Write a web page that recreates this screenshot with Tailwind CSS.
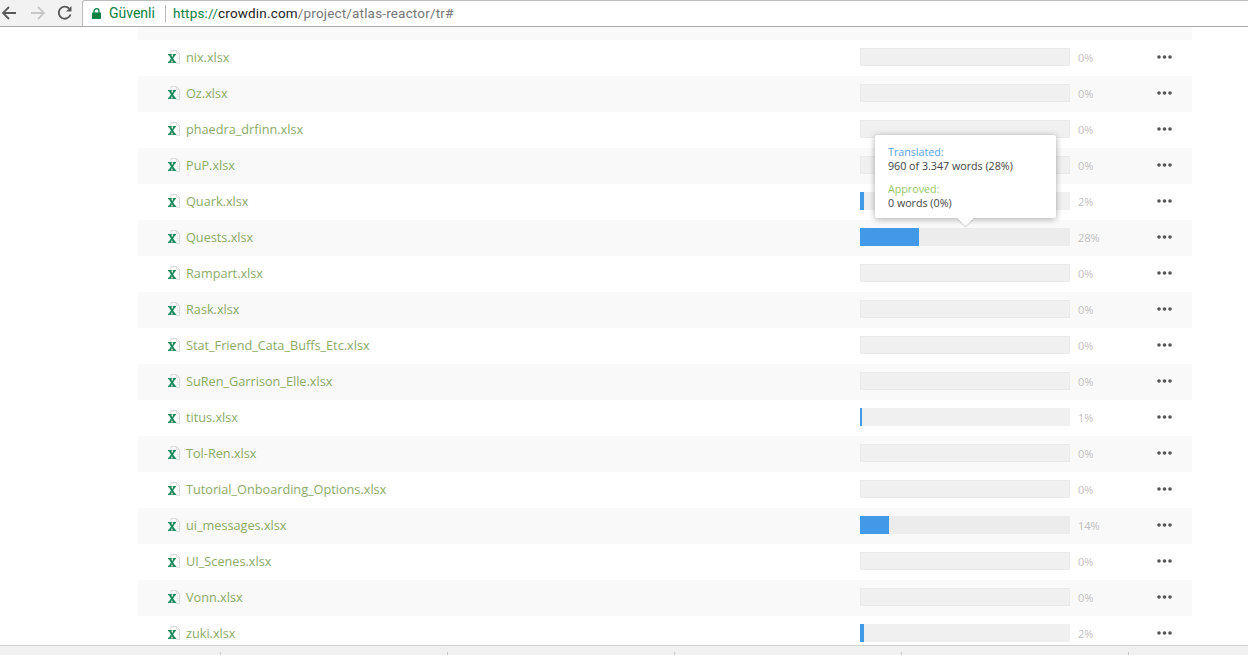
<!doctype html>
<html>
<head>
<meta charset="utf-8">
<script src="https://cdn.jsdelivr.net/npm/@tailwindcss/browser@4"></script>
</head>
<body class="m-0 bg-white">
<svg class="hidden"><defs>
<symbol id="xl" viewBox="0 0 12 14">
<path d="M3 3.500V.5H8.500L11.500 3.500V13.500H8.500" fill="none" stroke="#d8dcda"/>
<path d="M8.500 .5V3.500H11.500M9 6H10.500M9 8.500H10.500M9 11H10.500" fill="none" stroke="#e0e3e1"/>
<path d="M0 4H3.800V5.200H3.300L4.200 7L5.200 5.200H4.700V4H8V5.200H7.200L5.200 8.500L7.400 11.800H8.200V13H4.300V11.800H4.800L4 10.200L3.100 11.800H3.600V13H0V11.800H.8L2.900 8.600L.9 5.200H0Z" fill="#1f8a5b"/>
</symbol>
<symbol id="dots" viewBox="0 0 15 4">
<circle cx="2" cy="2" r="1.800" fill="#555"/><circle cx="7.500" cy="2" r="1.800" fill="#555"/><circle cx="13" cy="2" r="1.800" fill="#555"/>
</symbol>
</defs></svg>
<div class="relative flex h-[655px] w-[1248px] flex-col overflow-hidden font-['Open_Sans',sans-serif]">
  <header class="flex h-[27px] shrink-0 items-center border-b border-[#a9a9a9] bg-[#f2f2f2]">
    <svg class="ml-[1px] h-4 w-4" viewBox="0 0 16 16" fill="none" stroke="#5a5a5a" stroke-width="1.800"><path d="M15 8H2M8 2L2 8L8 14"/></svg>
    <svg class="ml-[13px] h-4 w-4" viewBox="0 0 16 16" fill="none" stroke="#c8c8c8" stroke-width="1.800"><path d="M1 8H14M8 2L14 8L8 14"/></svg>
    <svg class="ml-[11px] h-4 w-4" viewBox="0 0 16 16" fill="none" stroke="#5a5a5a" stroke-width="1.900"><path d="M13.500 9.500A6 6 0 1 1 12.200 3.600"/><path d="M14.500 1V6.500H9Z" fill="#5a5a5a" stroke="none"/></svg>
    <div class="ml-[9px] flex h-[26px] flex-1 items-center rounded-tl-[3px] border-l border-t border-[#bdbdbd] bg-white pl-[9px]">
      <svg class="h-[11px] w-[9px]" viewBox="0 0 9 11"><path d="M2 5V3.200A2.500 2.500 0 0 1 7 3.200V5" fill="none" stroke="#0b8043" stroke-width="1.300"/><rect x="0" y="4.500" width="9" height="6.500" rx=".7" fill="#0b8043"/></svg>
      <span class="ml-[8px] font-['Roboto',sans-serif] text-[14px] text-[#0b8043]">Güvenli</span>
      <span class="ml-[10px] h-[17px] w-px bg-[#b5b5b5]"></span>
      <span class="ml-[7px] font-['Roboto',sans-serif] text-[13.500px] tracking-[0.17px] text-[#777]"><span class="text-[#0b8043]">https://</span><span class="text-[#222]">crowdin.com</span>/project/atlas-reactor/tr#</span>
    </div>
  </header>

  <main class="min-h-0 flex-1 overflow-hidden">
    <div class="ml-[138px] h-[13px] w-[1054px] bg-[#f9f9f9]"></div>
    <ul class="ml-[138px] w-[1054px] text-[12.700px] text-[#8cab68]">
      <li class="flex h-9 items-center pb-0.5 pl-[30px]"><svg class="h-[14px] w-[12px]"><use href="#xl"/></svg><span class="ml-[6px] mt-0.5 w-[674px]">nix.xlsx</span><div class="h-[18px] w-[210px] border border-[#ebebeb] bg-[#f0f0f0]"></div><span class="ml-2 mt-0.5 w-[79px] text-[11px] text-[#c0c0c0]">0%</span><svg class="h-1 w-[15px]"><use href="#dots"/></svg></li>
      <li class="flex h-9 items-center bg-[#f9f9f9] pb-0.5 pl-[30px]"><svg class="h-[14px] w-[12px]"><use href="#xl"/></svg><span class="ml-[6px] mt-0.5 w-[674px]">Oz.xlsx</span><div class="h-[18px] w-[210px] border border-[#ebebeb] bg-[#f0f0f0]"></div><span class="ml-2 mt-0.5 w-[79px] text-[11px] text-[#c0c0c0]">0%</span><svg class="h-1 w-[15px]"><use href="#dots"/></svg></li>
      <li class="flex h-9 items-center pb-0.5 pl-[30px]"><svg class="h-[14px] w-[12px]"><use href="#xl"/></svg><span class="ml-[6px] mt-0.5 w-[674px]">phaedra_drfinn.xlsx</span><div class="h-[18px] w-[210px] border border-[#ebebeb] bg-[#f0f0f0]"></div><span class="ml-2 mt-0.5 w-[79px] text-[11px] text-[#c0c0c0]">0%</span><svg class="h-1 w-[15px]"><use href="#dots"/></svg></li>
      <li class="flex h-9 items-center bg-[#f9f9f9] pb-0.5 pl-[30px]"><svg class="h-[14px] w-[12px]"><use href="#xl"/></svg><span class="ml-[6px] mt-0.5 w-[674px]">PuP.xlsx</span><div class="h-[18px] w-[210px] border border-[#ebebeb] bg-[#f0f0f0]"></div><span class="ml-2 mt-0.5 w-[79px] text-[11px] text-[#c0c0c0]">0%</span><svg class="h-1 w-[15px]"><use href="#dots"/></svg></li>
      <li class="flex h-9 items-center pb-0.5 pl-[30px]"><svg class="h-[14px] w-[12px]"><use href="#xl"/></svg><span class="ml-[6px] mt-0.5 w-[674px]">Quark.xlsx</span><div class="h-[18px] w-[210px] bg-[#f0f0f0]"><div class="h-full w-1 bg-[#4299e8]"></div></div><span class="ml-2 mt-0.5 w-[79px] text-[11px] text-[#c0c0c0]">2%</span><svg class="h-1 w-[15px]"><use href="#dots"/></svg></li>
      <li class="flex h-9 items-center bg-[#f9f9f9] pb-0.5 pl-[30px]"><svg class="h-[14px] w-[12px]"><use href="#xl"/></svg><span class="ml-[6px] mt-0.5 w-[674px]">Quests.xlsx</span><div class="h-[18px] w-[210px] bg-[#ececec]"><div class="h-full w-[59px] bg-[#4299e8]"></div></div><span class="ml-2 mt-0.5 w-[79px] text-[11px] text-[#c0c0c0]">28%</span><svg class="h-1 w-[15px]"><use href="#dots"/></svg></li>
      <li class="flex h-9 items-center pb-0.5 pl-[30px]"><svg class="h-[14px] w-[12px]"><use href="#xl"/></svg><span class="ml-[6px] mt-0.5 w-[674px]">Rampart.xlsx</span><div class="h-[18px] w-[210px] border border-[#ebebeb] bg-[#f0f0f0]"></div><span class="ml-2 mt-0.5 w-[79px] text-[11px] text-[#c0c0c0]">0%</span><svg class="h-1 w-[15px]"><use href="#dots"/></svg></li>
      <li class="flex h-9 items-center bg-[#f9f9f9] pb-0.5 pl-[30px]"><svg class="h-[14px] w-[12px]"><use href="#xl"/></svg><span class="ml-[6px] mt-0.5 w-[674px]">Rask.xlsx</span><div class="h-[18px] w-[210px] border border-[#ebebeb] bg-[#f0f0f0]"></div><span class="ml-2 mt-0.5 w-[79px] text-[11px] text-[#c0c0c0]">0%</span><svg class="h-1 w-[15px]"><use href="#dots"/></svg></li>
      <li class="flex h-9 items-center pb-0.5 pl-[30px]"><svg class="h-[14px] w-[12px]"><use href="#xl"/></svg><span class="ml-[6px] mt-0.5 w-[674px]">Stat_Friend_Cata_Buffs_Etc.xlsx</span><div class="h-[18px] w-[210px] border border-[#ebebeb] bg-[#f0f0f0]"></div><span class="ml-2 mt-0.5 w-[79px] text-[11px] text-[#c0c0c0]">0%</span><svg class="h-1 w-[15px]"><use href="#dots"/></svg></li>
      <li class="flex h-9 items-center bg-[#f9f9f9] pb-0.5 pl-[30px]"><svg class="h-[14px] w-[12px]"><use href="#xl"/></svg><span class="ml-[6px] mt-0.5 w-[674px]">SuRen_Garrison_Elle.xlsx</span><div class="h-[18px] w-[210px] border border-[#ebebeb] bg-[#f0f0f0]"></div><span class="ml-2 mt-0.5 w-[79px] text-[11px] text-[#c0c0c0]">0%</span><svg class="h-1 w-[15px]"><use href="#dots"/></svg></li>
      <li class="flex h-9 items-center pb-0.5 pl-[30px]"><svg class="h-[14px] w-[12px]"><use href="#xl"/></svg><span class="ml-[6px] mt-0.5 w-[674px]">titus.xlsx</span><div class="h-[18px] w-[210px] bg-[#f0f0f0]"><div class="h-full w-0.5 bg-[#4299e8]"></div></div><span class="ml-2 mt-0.5 w-[79px] text-[11px] text-[#c0c0c0]">1%</span><svg class="h-1 w-[15px]"><use href="#dots"/></svg></li>
      <li class="flex h-9 items-center bg-[#f9f9f9] pb-0.5 pl-[30px]"><svg class="h-[14px] w-[12px]"><use href="#xl"/></svg><span class="ml-[6px] mt-0.5 w-[674px]">Tol-Ren.xlsx</span><div class="h-[18px] w-[210px] border border-[#ebebeb] bg-[#f0f0f0]"></div><span class="ml-2 mt-0.5 w-[79px] text-[11px] text-[#c0c0c0]">0%</span><svg class="h-1 w-[15px]"><use href="#dots"/></svg></li>
      <li class="flex h-9 items-center pb-0.5 pl-[30px]"><svg class="h-[14px] w-[12px]"><use href="#xl"/></svg><span class="ml-[6px] mt-0.5 w-[674px]">Tutorial_Onboarding_Options.xlsx</span><div class="h-[18px] w-[210px] border border-[#ebebeb] bg-[#f0f0f0]"></div><span class="ml-2 mt-0.5 w-[79px] text-[11px] text-[#c0c0c0]">0%</span><svg class="h-1 w-[15px]"><use href="#dots"/></svg></li>
      <li class="flex h-9 items-center bg-[#f9f9f9] pb-0.5 pl-[30px]"><svg class="h-[14px] w-[12px]"><use href="#xl"/></svg><span class="ml-[6px] mt-0.5 w-[674px]">ui_messages.xlsx</span><div class="h-[18px] w-[210px] bg-[#ececec]"><div class="h-full w-[29px] bg-[#4299e8]"></div></div><span class="ml-2 mt-0.5 w-[79px] text-[11px] text-[#c0c0c0]">14%</span><svg class="h-1 w-[15px]"><use href="#dots"/></svg></li>
      <li class="flex h-9 items-center pb-0.5 pl-[30px]"><svg class="h-[14px] w-[12px]"><use href="#xl"/></svg><span class="ml-[6px] mt-0.5 w-[674px]">UI_Scenes.xlsx</span><div class="h-[18px] w-[210px] border border-[#ebebeb] bg-[#f0f0f0]"></div><span class="ml-2 mt-0.5 w-[79px] text-[11px] text-[#c0c0c0]">0%</span><svg class="h-1 w-[15px]"><use href="#dots"/></svg></li>
      <li class="flex h-9 items-center bg-[#f9f9f9] pb-0.5 pl-[30px]"><svg class="h-[14px] w-[12px]"><use href="#xl"/></svg><span class="ml-[6px] mt-0.5 w-[674px]">Vonn.xlsx</span><div class="h-[18px] w-[210px] border border-[#ebebeb] bg-[#f0f0f0]"></div><span class="ml-2 mt-0.5 w-[79px] text-[11px] text-[#c0c0c0]">0%</span><svg class="h-1 w-[15px]"><use href="#dots"/></svg></li>
      <li class="flex h-9 items-center pb-0.5 pl-[30px]"><svg class="h-[14px] w-[12px]"><use href="#xl"/></svg><span class="ml-[6px] mt-0.5 w-[674px]">zuki.xlsx</span><div class="h-[18px] w-[210px] bg-[#f0f0f0]"><div class="h-full w-1 bg-[#4299e8]"></div></div><span class="ml-2 mt-0.5 w-[79px] text-[11px] text-[#c0c0c0]">2%</span><svg class="h-1 w-[15px]"><use href="#dots"/></svg></li>
    </ul>
  </main>

  <footer class="grid h-[10px] shrink-0 grid-cols-[220px_227px_227px_227px_227px_1fr] border-t border-[#d0d0d0] bg-[#f1f1f1] pt-[6px]">
    <span></span><span class="border-l border-[#c8c8c8]"></span><span class="border-l border-[#c8c8c8]"></span><span class="border-l border-[#c8c8c8]"></span><span class="border-l border-[#c8c8c8]"></span><span class="border-l border-[#c8c8c8]"></span>
  </footer>

  <div class="absolute left-[875px] top-[135px] h-[83px] w-[181px] rounded-[2px] bg-white pl-[13px] pt-[10px] text-[10.700px] leading-[14px] text-[#444] shadow-[0_1px_6px_rgba(0,0,0,0.35)]">
    <div class="text-[#5aa3e6]">Translated:</div>
    <div>960 of 3.347 words (28%)</div>
    <div class="mt-[9px] text-[#9bc76b]">Approved:</div>
    <div>0 words (0%)</div>
    <div class="absolute left-[85px] top-[78px] h-[11px] w-[11px] rotate-45 bg-white shadow-[1px_1px_1px_rgba(0,0,0,0.12)]"></div>
  </div>
</div>
</body>
</html>
